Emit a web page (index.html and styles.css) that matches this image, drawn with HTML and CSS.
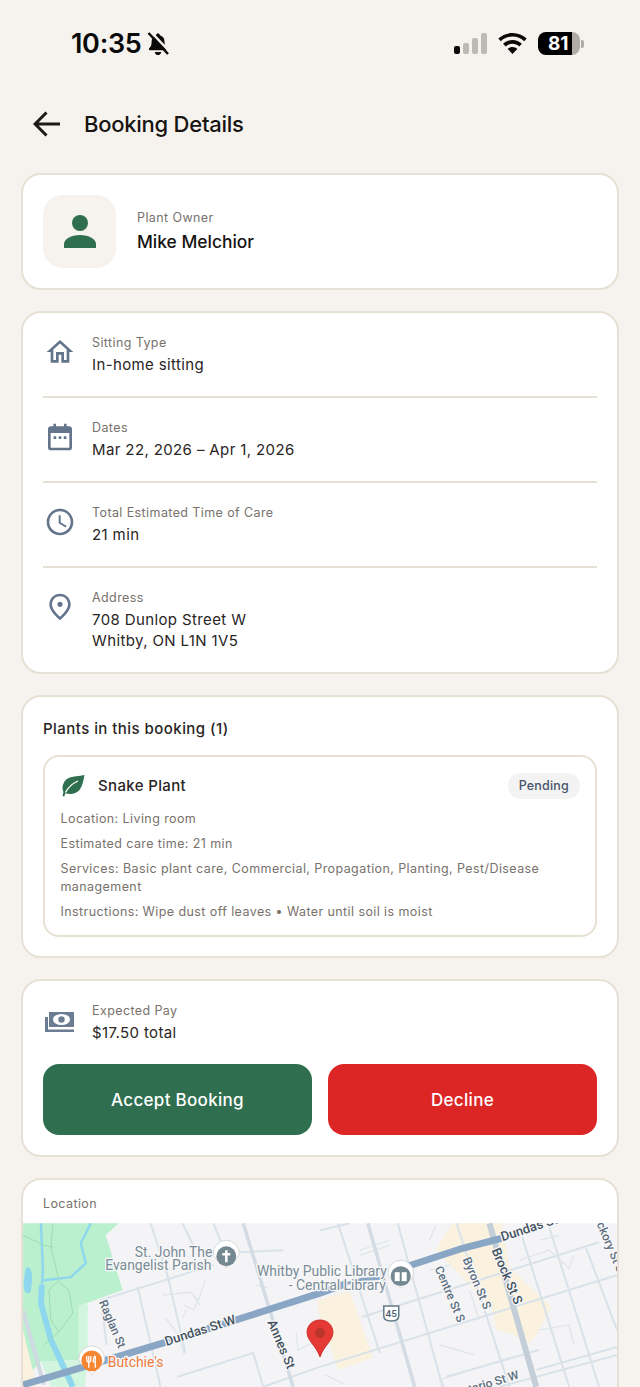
FILE: index.html
```html
<!DOCTYPE html>
<html lang="en">
<head>
<meta charset="utf-8">
<title>Booking Details</title>
<link rel="stylesheet" href="styles.css">
</head>
<body>
<div class="statusbar">
  <div class="status-left">
    <span class="time">10:35</span>
    <svg class="bell" viewBox="0 0 22 24"><path d="M11 1.500c1.100 0 1.800.7 1.900 1.700 3 .8 4.600 3.300 4.600 6.600 0 3.200.8 5 2.400 6.400.7.7.3 2-.8 2H3c-1.100 0-1.500-1.300-.8-2 1.600-1.400 2.400-3.200 2.400-6.400 0-3.300 1.500-5.800 4.500-6.600.1-1 .8-1.700 1.900-1.700zM7.800 20h6.400c-.2 1.900-1.500 3.100-3.200 3.100S8 21.900 7.800 20z"/><path class="bell-gap" d="M3.500 -.5 23 20"/><path class="bell-slash" d="M1.500 1 21 22"/></svg>
  </div>
  <div class="status-right">
    <svg class="signal" viewBox="0 0 33 21"><rect class="on" x="0" y="13" width="6" height="8" rx="2"/><rect class="off" x="9" y="10" width="6" height="11" rx="2"/><rect class="off" x="18" y="5" width="6" height="16" rx="2"/><rect class="off" x="27" y="0" width="6" height="21" rx="2"/></svg>
    <svg class="wifi" viewBox="0 0 29 21"><path d="M14.500 0C9 0 4 2.100.3 5.600l2.500 2.700C5.800 5.300 9.900 3.600 14.500 3.600s8.700 1.700 11.700 4.700l2.500-2.700C25 2.100 20 0 14.500 0z"/><path d="M14.500 7c-3.600 0-6.900 1.400-9.400 3.700l2.600 2.700c1.800-1.700 4.200-2.700 6.800-2.700s5 1 6.800 2.700l2.600-2.700C21.400 8.400 18.100 7 14.500 7z"/><path d="M14.500 14c-1.900 0-3.500.7-4.800 1.900l4.800 5.100 4.800-5.100c-1.300-1.200-2.900-1.900-4.800-1.900z"/></svg>
    <div class="battery"><div class="battery-body"><span class="battery-num">81</span></div><span class="battery-cap"></span></div>
  </div>
</div>

<header class="topbar">
  <svg class="back" viewBox="0 0 28 26"><path d="M27 13H2M13.500 1.500 2 13l11.500 11.500"/></svg>
  <h1 class="page-title">Booking Details</h1>
</header>

<main class="stack">
  <section class="card owner">
    <div class="avatar">
      <svg class="avatar-icon" viewBox="0 0 32 33"><circle cx="16" cy="8" r="8"/><path d="M0 33v-4c0-5 7-9 16-9s16 4 16 9v4z"/></svg>
    </div>
    <div>
      <div class="label">Plant Owner</div>
      <div class="owner-name">Mike Melchior</div>
    </div>
  </section>

  <section class="card details">
    <div class="row">
      <svg class="ico" viewBox="0 0 24 24"><path d="M12 5.690l5 4.500V18h-2v-6H9v6H7v-7.810l5-4.500M12 3 2 12h3v8h6v-6h2v6h6v-8h3L12 3z"/></svg>
      <div><div class="label">Sitting Type</div><div class="value">In-home sitting</div></div>
    </div>
    <div class="row">
      <svg class="ico" viewBox="0 0 24 24"><path d="M7 2h2v2h6V2h2v2h2c1.100 0 2 .9 2 2v14c0 1.100-.9 2-2 2H5c-1.100 0-2-.9-2-2V6c0-1.100.9-2 2-2h2V2zM5 9v11h14V9H5z"/><rect x="7.200" y="11.500" width="2" height="2" rx=".4"/><rect x="11" y="11.500" width="2" height="2" rx=".4"/><rect x="14.800" y="11.500" width="2" height="2" rx=".4"/></svg>
      <div><div class="label">Dates</div><div class="value">Mar 22, 2026 – Apr 1, 2026</div></div>
    </div>
    <div class="row">
      <svg class="ico" viewBox="0 0 24 24"><path d="M11.990 2C6.470 2 2 6.480 2 12s4.470 10 9.990 10C17.520 22 22 17.520 22 12S17.520 2 11.990 2zM12 20c-4.420 0-8-3.580-8-8s3.580-8 8-8 8 3.580 8 8-3.580 8-8 8zm.5-13H11v6l5.250 3.150.75-1.230-4.500-2.670z"/></svg>
      <div><div class="label">Total Estimated Time of Care</div><div class="value">21 min</div></div>
    </div>
    <div class="row">
      <svg class="ico" viewBox="0 0 24 24"><path d="M12 12c-1.100 0-2-.9-2-2s.9-2 2-2 2 .9 2 2-.9 2-2 2zm6-1.800C18 6.570 15.350 4 12 4s-6 2.570-6 6.200c0 2.340 1.950 5.440 6 9.140 4.050-3.700 6-6.800 6-9.140zM12 2c4.200 0 8 3.220 8 8.200 0 3.320-2.670 7.250-8 11.800-5.330-4.550-8-8.480-8-11.800C4 5.220 7.800 2 12 2z"/></svg>
      <div><div class="label">Address</div><div class="value">708 Dunlop Street W<br>Whitby, ON L1N 1V5</div></div>
    </div>
  </section>

  <section class="card plants">
    <h2 class="section-title">Plants in this booking (1)</h2>
    <div class="plant">
      <div class="plant-head">
        <svg class="leaf" viewBox="0 0 24 24"><path d="M23.500 1C16 3 7.500 1.500 3.500 7.500 1 11.500 1 15 2.500 18L1.500 22l1.700.6 1.300-3.400c4.500 1.500 10.500 1 14-3.200C21.500 12 22.500 6 23.500 1z"/><path class="leaf-vein" d="M4.500 18.500C7 13.500 11.500 9.500 17 7"/></svg>
        <span class="plant-name">Snake Plant</span>
        <span class="badge">Pending</span>
      </div>
      <p class="plant-line">Location: Living room</p>
      <p class="plant-line">Estimated care time: 21 min</p>
      <p class="plant-line">Services: Basic plant care, Commercial, Propagation, Planting, Pest/Disease management</p>
      <p class="plant-line">Instructions: Wipe dust off leaves • Water until soil is moist</p>
    </div>
  </section>

  <section class="card pay">
    <div class="pay-row">
      <svg class="ico ico-money" viewBox="0 0 32 32"><rect x="5" y="9" width="25" height="15"/><ellipse class="note-hole" cx="17.500" cy="16.500" rx="8.500" ry="5.500"/><circle cx="17.500" cy="16.500" r="3.200"/><path d="M1 14h3v12.500h26V29H1z"/></svg>
      <div><div class="label">Expected Pay</div><div class="value">$17.50 total</div></div>
    </div>
    <div class="actions">
      <button class="btn btn-accept">Accept Booking</button>
      <button class="btn btn-decline">Decline</button>
    </div>
  </section>

  <section class="card location">
    <div class="location-label">Location</div>
    <div class="map">
      <svg class="map-svg" viewBox="22 1223 596 200">
        <rect class="m-bg" x="22" y="1223" width="596" height="200"/>
        <path class="m-park" d="M22 1223H118L105 1235 122 1290 100 1298 78 1306 78 1360 40 1362 22 1380z"/>
        <path class="m-park2" d="M78 1306 87 1303 87 1360 84 1387H50L40 1362 78 1360z"/>
        <path class="m-sand" d="M22 1330 36 1387H22z"/>
        <path class="m-sand" d="M318 1300 350 1291 373 1358 338 1370 318 1310z"/>
        <path class="m-sand" d="M453 1223H503L510 1267 537 1293 552 1307 540 1330 530 1343 510 1333 497 1330 493 1310 463 1277 437 1250 440 1242z"/>
        <path class="m-water-thin" d="M40 1223 42 1270 40 1300"/>
        <path class="m-water-thin" d="M90 1223 80 1243 85 1263 70 1277 43 1280"/>
        <path class="m-water" d="M41 1285 40 1303 50 1340 72 1387"/>
        <path class="m-pond" d="M27 1267c3 0 5 8 4 14s0 12-4 12-5-6-4-13 1-13 4-13z"/>
        <g class="m-path">
          <path d="M22 1235 43 1245 52 1247"/>
          <path d="M52 1223 50 1247 58 1280 48 1290 50 1320 58 1332 72 1313 68 1290 58 1282"/>
          <path d="M58 1332 43 1345"/>
        </g>
        <path class="m-grey-road" d="M22 1310 43 1385"/>
        <g class="m-street">
          <path d="M100 1300 190 1272 213 1265"/>
          <path d="M150 1223 167 1275 185 1353"/>
          <path d="M137 1287 160 1387"/>
          <path d="M182 1223 195 1250"/>
          <path d="M213 1223 223 1247"/>
          <path d="M240 1252 283 1250"/>
          <path d="M320 1367 618 1275"/>
          <path d="M362 1317 600 1242"/>
          <path d="M537 1370 618 1347"/>
          <path d="M447 1377 540 1350"/>
          <path d="M338 1223 380 1353"/>
          <path d="M398 1223 443 1387"/>
          <path d="M457 1223 510 1387"/>
          <path d="M523 1237 570 1387"/>
          <path d="M550 1227 600 1387"/>
          <path d="M587 1248 618 1330"/>
          <path d="M263 1387 320 1367"/>
          <path d="M177 1377 253 1353 263 1387"/>
          <path d="M100 1300 106 1345"/>
          <path d="M320 1230 350 1223"/>
          <path d="M500 1387 618 1355"/>
        </g>
        <g class="m-lane">
          <path d="M162 1295 190 1292 198 1300 205 1280"/>
          <path d="M198 1300 193 1310 184 1305M193 1296 200 1305M186 1310 182 1318"/>
          <path d="M165 1318 178 1335 184 1355"/>
          <path d="M256 1285 268 1288"/>
          <path d="M296 1333 298 1350 320 1340"/>
          <path d="M360 1250 390 1240M360 1255 390 1245"/>
          <path d="M430 1270 450 1265M470 1290 480 1320"/>
          <path d="M520 1260 550 1250 570 1268 575 1255"/>
          <path d="M325 1375 345 1385"/>
          <path d="M440 1345 475 1355M472 1370 440 1380 445 1387"/>
          <path d="M540 1330 570 1325 575 1345"/>
          <path d="M436 1225 430 1240M540 1240 560 1235"/>
        </g>
        <path class="m-major-grey" d="M243 1223 293 1387"/>
        <path class="m-major-grey" d="M368 1223 415 1387"/>
        <path class="m-brock" d="M490 1223 537 1387"/>
        <path class="m-road" d="M22 1385 83 1367 163 1343 267 1310 320 1293 345 1284"/>
        <path class="m-road" d="M408 1266 463 1248 502 1238"/>
        <path class="m-road-thin" d="M345 1284 362 1279 385 1278"/>

        <text class="m-label" x="212" y="1257" text-anchor="end">St. John The</text>
        <text class="m-label" x="211" y="1270" text-anchor="end">Evangelist Parish</text>
        <text class="m-label" x="387" y="1276" text-anchor="end">Whitby Public Library</text>
        <text class="m-label" x="386" y="1290" text-anchor="end">- Central Library</text>
        <text class="m-road-label" transform="translate(166 1346) rotate(-18)">Dundas St W</text>
        <text class="m-road-label" transform="translate(503 1241) rotate(-18)">Dundas St</text>
        <text class="m-street-label" transform="translate(98 1302) rotate(67)">Raglan St</text>
        <text class="m-road-label" transform="translate(267 1322) rotate(67)">Annes St</text>
        <text class="m-street-label" transform="translate(435 1268) rotate(67)">Centre St S</text>
        <text class="m-street-label" transform="translate(463 1259) rotate(67)">Byron St S</text>
        <text class="m-road-label" transform="translate(492 1250) rotate(67)">Brock St S</text>
        <text class="m-street-label" transform="translate(593 1213) rotate(67)">Hickory St S</text>
        <text class="m-street-label" transform="translate(456 1398) rotate(-17)">Ontario St W</text>

        <path class="m-poi-shadow" d="M213 1253a13 13 0 1 1 26 0c0 6-8 9-13 15-5-6-13-9-13-15z"/>
        <circle class="m-poi-grey" cx="226" cy="1256" r="10"/>
        <path class="m-white-stroke" d="M226 1250v12M222 1254h8"/>
        <path class="m-poi-shadow" d="M388 1273a13 13 0 1 1 26 0c0 6-8 9-13 15-5-6-13-9-13-15z"/>
        <circle class="m-poi-grey" cx="401" cy="1276" r="10"/>
        <rect class="m-white" x="395" y="1272" width="5" height="9"/>
        <rect class="m-white" x="402" y="1272" width="5" height="9"/>
        <path class="m-poi-shadow" d="M78 1359a13 13 0 1 1 26 0c0 6-8 9-13 16-5-7-13-10-13-16z"/>
        <circle class="m-poi-orange" cx="91" cy="1361" r="10.500"/>
        <path class="m-white-stroke-thin" d="M86 1356v3.500c0 2 1 2.500 2 2.500s2-.5 2-2.500V1356M88 1356v12M94.500 1356c-1.500 1-2 3-2 6h2M94.500 1356v12"/>
        <text class="m-poi-label" x="107" y="1367">Butchie's</text>

        <path class="m-shield" d="M384 1306h15v10c0 3-3 5-7.500 5s-7.500-2-7.500-5z"/>
        <text class="m-shield-text" x="391.500" y="1317" text-anchor="middle">45</text>

        <path class="m-pin" d="M320 1320c7.500 0 13 5.500 13 12.500 0 8-9 13-13 24.500-4-11.500-13-16.500-13-24.500 0-7 5.500-12.500 13-12.500z"/>
        <circle class="m-pin-dot" cx="320" cy="1333" r="5"/>
      </svg>
    </div>
  </section>
</main>
</body>
</html>
```

FILE: styles.css
```css
* { box-sizing: border-box; }
html, body { margin: 0; padding: 0; }
body {
  height: 1387px;
  overflow: hidden;
  background: #f6f3ee;
  font-family: Inter, "Liberation Sans", sans-serif;
  color: #1c1917;
}

/* status bar */
.statusbar {
  height: 86px;
  display: flex;
  justify-content: space-between;
  align-items: flex-start;
  padding: 27px 56px 0 71px;
}
.status-left { display: flex; align-items: center; gap: 5px; }
.time { font-size: 27px; line-height: 33px; font-weight: 600; color: #0a0a0a; letter-spacing: -0.3px; }
.bell { width: 22px; height: 24px; fill: #0a0a0a; }
.bell-gap { stroke: #f6f3ee; stroke-width: 2.500; fill: none; }
.bell-slash { stroke: #0a0a0a; stroke-width: 2.500; fill: none; }
.status-right { display: flex; align-items: center; gap: 11px; padding-top: 5px; }
.signal { width: 33px; height: 21px; }
.signal .on { fill: #0a0a0a; }
.signal .off { fill: #bdbab5; }
.wifi { width: 29px; height: 21px; fill: #0a0a0a; }
.battery { display: flex; align-items: center; gap: 1px; }
.battery-body {
  width: 42px;
  height: 23px;
  border-radius: 8px;
  background: linear-gradient(90deg, #000 0 81%, #b0ada8 81%);
  display: flex;
  align-items: center;
  padding-left: 10px;
}
.battery-num { color: #fff; font-size: 19px; font-weight: 700; line-height: 23px; }
.battery-cap { width: 3px; height: 8px; border-radius: 0 2px 2px 0; background: #b0ada8; }

/* header */
.topbar {
  height: 76px;
  display: flex;
  align-items: center;
  gap: 23px;
  padding: 0 0 0 33px;
}
.back { width: 28px; height: 26px; fill: none; stroke: #1c1917; stroke-width: 3; }
.page-title { margin: 0; font-size: 22px; font-weight: 500; line-height: 28px; color: #171412; letter-spacing: -0.25px; }

/* cards */
.stack { display: flex; flex-direction: column; gap: 21px; padding: 11px 21px 0; }
.card { background: #fff; border: 2px solid #e6e0d5; border-radius: 20px; }

.owner { height: 117px; display: flex; align-items: center; gap: 21px; padding: 0 20px; }
.avatar {
  width: 73px;
  height: 73px;
  border-radius: 20px;
  background: #f6f3ee;
  display: flex;
  align-items: center;
  justify-content: center;
}
.avatar-icon { width: 32px; height: 33px; fill: #2f6f4f; }
.label { font-size: 12.500px; line-height: 17px; color: #78716c; letter-spacing: 0.4px; }
.owner-name { font-size: 17.400px; font-weight: 500; line-height: 24px; margin-top: 4px; color: #171412; }
.value { font-size: 15px; line-height: 21px; margin-top: 3px; color: #292524; letter-spacing: 0.38px; font-weight: 400; }

.details { padding: 0 20px; height: 363px; }
.row { display: flex; align-items: flex-start; gap: 16px; padding: 21px 0 21px 1px; border-bottom: 2px solid #e6e0d5; }
.row:last-child { border-bottom: 0; }
.ico { width: 32px; height: 32px; fill: #64748b; flex: none; margin-top: 2px; }
.ico-money { fill: #6b7d92; margin-top: 1px; }

.plants { padding: 20px 20px 19px; }
.section-title { margin: 0 0 14px; font-size: 15px; line-height: 24px; font-weight: 500; color: #292524; letter-spacing: 0.45px; }
.plant { border: 2px solid #e6e0d5; border-radius: 16px; padding: 15px 15px 14px; height: 182px; }
.plant-head { display: flex; align-items: center; gap: 13px; height: 28px; margin-bottom: 10px; }
.leaf { width: 24px; height: 24px; fill: #2f6f4f; margin-left: 1px; }
.leaf-vein { fill: none; stroke: #fff; stroke-width: 1.300; }
.plant-name { flex: 1; font-size: 15px; font-weight: 500; color: #292524; letter-spacing: 0.35px; line-height: 26px; }
.badge { background: #f3f3f4; color: #475569; font-size: 12.500px; font-weight: 500; line-height: 26px; height: 26px; padding: 0 11px; border-radius: 13px; letter-spacing: 0.2px; }
.plant-line { margin: 0 0 7px; font-size: 12.500px; line-height: 18px; color: #78716c; letter-spacing: 0.41px; padding-left: 0.500px; }

.pay { padding: 21px 20px 0; height: 178px; }
.pay-row { display: flex; gap: 16px; align-items: flex-start; padding-left: 1px; }
.actions { display: flex; gap: 16px; margin-top: 21px; }
.btn {
  flex: 1;
  height: 71px;
  border: 0;
  border-radius: 16px;
  color: #fff;
  font-family: inherit;
  font-size: 17px;
  font-weight: 500;
  letter-spacing: 0.3px;
}
.btn-accept { background: #2f6f4f; }
.btn-decline { background: #dc2626; }

/* location / map */
.location { height: 300px; overflow: hidden; }
.location-label { height: 43px; padding: 15px 20px 0; font-size: 12.500px; line-height: 17px; color: #78716c; letter-spacing: 0.4px; }
.map { height: 200px; }
.map-svg { display: block; width: 100%; height: 200px; }
.m-bg { fill: #f4f3f5; }
.m-park { fill: #baf0cd; }
.m-park2 { fill: #d2f5e0; }
.m-sand { fill: #faf1de; }
.m-water { fill: none; stroke: #8fd7ef; stroke-width: 6; }
.m-water-thin { fill: none; stroke: #8fd7ef; stroke-width: 2.500; }
.m-pond { fill: #8fd7ef; }
.m-path { fill: none; stroke: #9bdcb5; stroke-width: 1; }
.m-grey-road { fill: none; stroke: #cfd9e2; stroke-width: 4; }
.m-street { fill: none; stroke: #d9e2e9; stroke-width: 2; }
.m-lane { fill: none; stroke: #dde5eb; stroke-width: 1.200; }
.m-major-grey { fill: none; stroke: #d3dce4; stroke-width: 3.500; }
.m-brock { fill: none; stroke: #c4ced8; stroke-width: 6; }
.m-road { fill: none; stroke: #8aa6c5; stroke-width: 7; }
.m-road-thin { fill: none; stroke: #8aa6c5; stroke-width: 3; }
.m-label, .m-road-label, .m-street-label, .m-poi-label, .m-shield-text {
  font-family: Roboto, sans-serif;
  paint-order: stroke;
  stroke: #f8f8f9;
  stroke-width: 2.500px;
  stroke-linejoin: round;
}
.m-label { font-size: 14px; fill: #7a8c97; }
.m-road-label { font-size: 13px; fill: #44525f; font-weight: 500; }
.m-street-label { font-size: 12px; fill: #5d6f80; font-weight: 500; }
.m-poi-label { font-size: 14px; fill: #ee7b3e; }
.m-shield-text { font-size: 10px; fill: #4b6272; stroke: none; font-weight: 500; }
.m-shield { fill: #fff; stroke: #607a88; stroke-width: 1.500; }
.m-poi-shadow { fill: #fff; stroke: #d5d8db; stroke-width: 1; }
.m-poi-grey { fill: #748892; }
.m-poi-orange { fill: #f58634; }
.m-white { fill: #fff; }
.m-white-stroke { fill: none; stroke: #fff; stroke-width: 2.500; }
.m-white-stroke-thin { fill: none; stroke: #fff; stroke-width: 1.300; }
.m-pin { fill: #e53935; stroke: #cf2f2b; stroke-width: 1; }
.m-pin-dot { fill: #b8352d; }
.note-hole { fill: #fff; }
```
